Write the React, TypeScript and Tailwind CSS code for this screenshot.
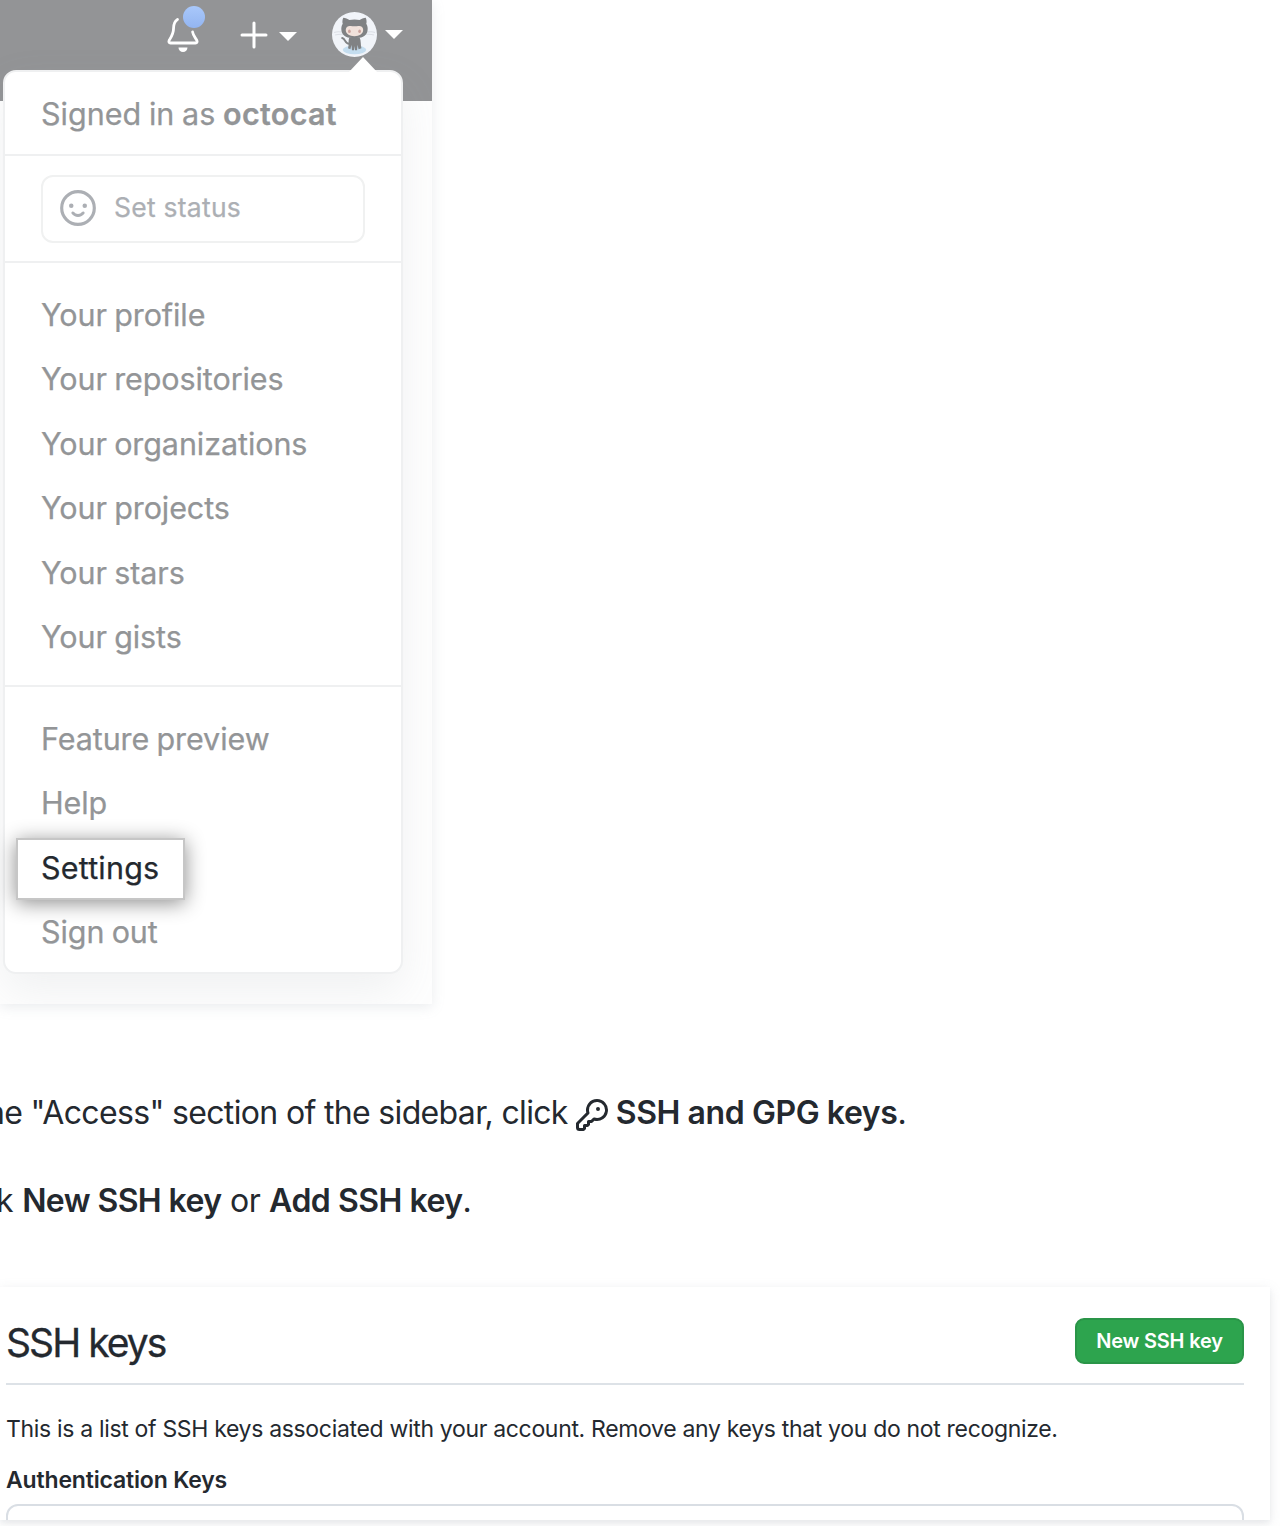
function Octocat() {
  return (
    <svg viewBox="0 0 44 44" className="size-[45px]">
      <circle cx="22" cy="22" r="22" fill="#f1f4f9" />
      <path d="M2 20c5-2 7 0 11 0M31 20c4 0 7-2 11 0M3 22.500c4-1 6-.5 10-1M31 21.500c4 .5 7 0 10 1" stroke="#dcdfe6" strokeWidth="1" fill="none" />
      <ellipse cx="22" cy="37" rx="11.500" ry="4.200" fill="#c5def0" />
      <path d="M17.500 31c-5 1-4-5-7.500-5.500" stroke="#808284" strokeWidth="2" fill="none" strokeLinecap="round" />
      <path d="M17 25h10c1.600 3 .8 7 1.800 10.500l-2.800.8-1-4-.5 5h-2l-.5-4-.5 4h-2l-.5-5-1 4-2.400-.8C17 32 15.500 28 17 25z" fill="#808284" />
      <path d="M11 5.500c2 0 4.500 1 6 2.300 3-.7 7-.7 10 0 1.500-1.300 4-2.300 6-2.300 1 2.500 1 4.500.5 6 1.200 2 1.700 4 1.200 7C33.500 24 28.500 25.500 22 25.500S10.500 24 9.300 18.500c-.5-3 0-5 1.200-7-.5-1.500-.5-3.500.5-6z" fill="#808284" />
      <path d="M16 14c2.500-.7 4 0 6 0s3.500-.7 6 0c4 1.200 4 9.700-6 9.700S12 15.200 16 14z" fill="#f1e2db" />
      <ellipse cx="17" cy="18.800" rx="1.300" ry="1.800" fill="#cba39d" />
      <ellipse cx="27" cy="18.800" rx="1.300" ry="1.800" fill="#cba39d" />
    </svg>
  );
}

function Caret() {
  return (
    <svg viewBox="0 0 18 9" className="h-[9px] w-[18px]">
      <path d="M0 0h18L9 9z" fill="#fff" />
    </svg>
  );
}

function Bell() {
  return (
    <svg viewBox="0 0 40 48" className="h-12 w-10">
      <path d="M13.500 14.500C10 16.500 9.500 20 9.500 24c0 4.500-1.500 6.500-4.300 11.300-.7 1.300-.2 2.700 1.300 2.700h25c1.500 0 2-1.400 1.300-2.700-2-3.500-4-6-4.200-8.300" fill="none" stroke="#fff" strokeWidth="2.800" strokeLinecap="round" />
      <path d="M14.500 42.500h9a4.500 4.500 0 0 1-9 0z" fill="#fff" />
    </svg>
  );
}

function Smiley() {
  return (
    <svg viewBox="0 0 16 16" className="size-[36px] shrink-0" fill="none" stroke="#acafb4">
      <circle cx="8" cy="8" r="7.250" strokeWidth="1.400" />
      <path d="M5.700 10.200c1.100 1.500 3.500 1.500 4.600 0" strokeWidth="1.300" strokeLinecap="round" />
      <circle cx="5" cy="7" r="1" fill="#acafb4" stroke="none" />
      <circle cx="11" cy="7" r="1" fill="#acafb4" stroke="none" />
    </svg>
  );
}

function KeyIcon() {
  return (
    <svg viewBox="0 0 16 16" className="relative top-[2px] size-8 shrink-0" fill="#24292f">
      <path d="M10.500 0a5.499 5.499 0 1 1-1.288 10.848l-.932.932a.749.749 0 0 1-.53.22H7v.75a.749.749 0 0 1-.22.53l-.5.5a.749.749 0 0 1-.53.22H5v.75a.749.749 0 0 1-.22.53l-.5.5a.749.749 0 0 1-.53.22h-2A1.750 1.750 0 0 1 0 14.250v-2c0-.199.079-.389.22-.53l4.932-4.932A5.500 5.500 0 0 1 10.500 0Zm-4 5.500c-.001.431.069.86.205 1.269a.75.75 0 0 1-.181.768L1.500 12.560v1.690c0 .138.112.25.25.25h1.690l.06-.06v-1.190a.75.75 0 0 1 .75-.75h1.190l.06-.06v-1.190a.75.75 0 0 1 .75-.75h1.190l1.023-1.025a.75.75 0 0 1 .768-.18A4 4 0 1 0 6.500 5.500ZM11 6a1 1 0 1 1 0-2 1 1 0 0 1 0 2Z" />
    </svg>
  );
}

const links = ["Your profile", "Your repositories", "Your organizations", "Your projects", "Your stars", "Your gists"];

function Item({ label }: { label: string }) {
  return (
    <li className="flex h-[64.4px] items-center pl-9">
      <span className="tracking-[-0.08px] [word-spacing:-1.2px]">{label}</span>
    </li>
  );
}

function AccountMenu() {
  return (
    <div className="absolute left-[3px] top-[70px] h-[904px] w-[400px] rounded-[13px] border-2 border-[#eff0f1] bg-white text-[30.5px] leading-none text-[#939597] shadow-[0_18px_44px_rgba(140,149,159,0.12)] [-webkit-text-stroke:0.25px_currentColor]">
      <div className="absolute right-[23px] -top-[15px]">
        <svg viewBox="0 0 30 16" className="h-4 w-[30px]"><path d="M0 16 15 0l15 16z" fill="#fff" /></svg>
      </div>
      <div className="flex h-[84px] items-center border-b-2 border-[#eff0f1] pl-9 pt-[3px]">
        <p className="whitespace-pre"><span className="[word-spacing:-0.8px]">Signed in as </span><b className="font-semibold tracking-[0.3px]">octocat</b></p>
      </div>
      <div className="h-[107px] border-b-2 border-[#eff0f1] px-9 pt-[19px]">
        <div className="flex h-[68px] items-center gap-[18px] rounded-xl border-2 border-[#f0f1f1] pb-[3px] pl-[17px] text-[26.5px] tracking-[0.25px] text-[#acafb4]">
          <Smiley />
          <span>Set status</span>
        </div>
      </div>
      <ul className="h-[424px] border-b-2 border-[#eff0f1] pt-5">
        {links.map((l) => <Item key={l} label={l} />)}
      </ul>
      <ul className="pt-5">
        <Item label="Feature preview" />
        <Item label="Help" />
        <li className="flex h-[64.4px] items-center pl-[11px]">
          <span className="mt-[3px] flex h-[62px] w-[169px] items-center border-2 border-[#c6c6c6] bg-white pb-[3px] pl-[23px] tracking-[0.2px] text-[#24292f] shadow-[0_3px_20px_rgba(0,0,0,0.45)]">Settings</span>
        </li>
        <Item label="Sign out" />
      </ul>
    </div>
  );
}

export default function App() {
  return (
    <main className="h-[1526px] w-[1280px] overflow-hidden bg-white font-['Inter',sans-serif] text-[#24292f]">
      <section className="w-[432px] shadow-[0_3px_12px_rgba(140,149,159,0.18)]">
        <div className="relative h-[1004px] overflow-hidden bg-[#fefefe]">
          <header className="flex h-[101px] bg-[#939496]">
            <div className="relative ml-[164px] mt-[5px] h-12">
              <Bell />
              <span className="absolute left-[19px] top-[1px] size-[22px] rounded-full bg-gradient-to-b from-[#a9c8fa] to-[#93b5f1]" />
            </div>
            <div className="ml-[36px] mt-[21px] flex h-7 items-center gap-[11px]">
              <svg viewBox="0 0 28 28" className="size-7"><path d="M14 2v24M2 14h24" stroke="#fff" strokeWidth="3" strokeLinecap="round" /></svg>
              <span className="mt-[3px]"><Caret /></span>
            </div>
            <div className="ml-[35px] mt-[12px] flex h-[45px] items-center gap-2">
              <Octocat />
              <Caret />
            </div>
          </header>
          <AccountMenu />
        </div>
      </section>
      <p className="mt-[89px] flex h-10 items-center whitespace-pre text-[32px] leading-10">
        <span className="-ml-[14px] tracking-[-0.66px]">he "Access" section of the sidebar, click </span>
        <KeyIcon />
        <b className="font-semibold tracking-[-0.42px]"> SSH and GPG keys</b>.
      </p>
      <p className="mt-12 flex h-10 items-center whitespace-pre text-[32px] leading-10">
        <span className="-ml-[4px] tracking-[-0.2px]">k </span>
        <b className="font-semibold tracking-[-0.6px]">New SSH key</b>
        <span className="tracking-[-0.4px]"> or </span>
        <b className="font-semibold tracking-[-0.5px]">Add SSH key</b>.
      </p>
      <section className="mt-[66px] w-[1270px] shadow-[0_3px_12px_rgba(140,149,159,0.16),0_3px_5px_rgba(140,149,159,0.1)]">
        <div className="h-[233px] overflow-hidden bg-white pl-[6px] pr-[26px]">
          <div className="flex h-[98px] items-center justify-between border-b-2 border-[#dde2e7] pt-[12px]">
            <h2 className="mt-1 text-[39px] tracking-[-1.95px] [-webkit-text-stroke:0.3px_currentColor]">SSH keys</h2>
            <button className="h-[46px] w-[169px] rounded-[9px] border-2 border-[#2a9548] bg-[#2da44e] text-[20px] font-semibold tracking-[-0.2px] text-white">New SSH key</button>
          </div>
          <p className="mt-[28px] whitespace-nowrap text-[23px] leading-8 tracking-[-0.325px]">This is a list of SSH keys associated with your account. Remove any keys that you do not recognize.</p>
          <h3 className="mt-[19px] text-[23px] font-semibold leading-8 tracking-[-0.17px]">Authentication Keys</h3>
          <div className="mt-2 h-20 rounded-xl border-2 border-[#d9dee4]" />
        </div>
      </section>
    </main>
  );
}
